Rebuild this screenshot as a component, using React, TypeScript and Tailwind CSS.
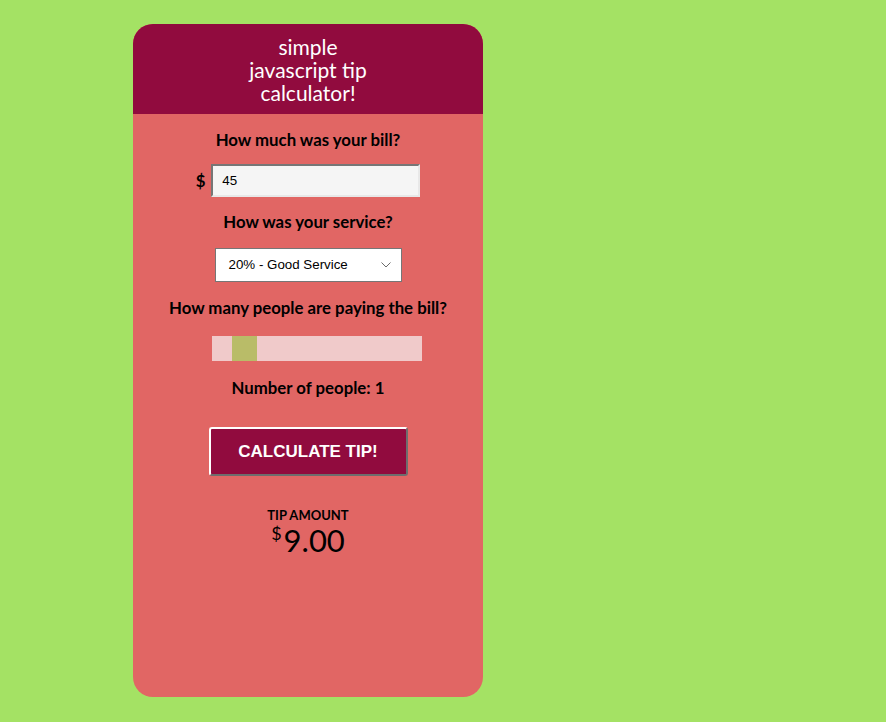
import React from "react";

export default function App() {
  const font = { fontFamily: "Lato, 'Noto Sans', sans-serif" };
  return (
    <div className="min-h-[722px] w-full bg-[#A4E264] pt-[24px] pl-[133px]" style={font}>
      <div className="w-[350px] h-[673px] rounded-[20px] overflow-hidden bg-[#E16664] flex flex-col">
        <div className="h-[90px] bg-[#910B3E] flex flex-col items-center justify-center text-white text-[21px] leading-[23px]">
          <span>simple</span>
          <span>javascript tip</span>
          <span>calculator!</span>
        </div>
        <div className="flex flex-col items-center pt-[16px] text-black">
          <div className="font-bold text-[16.8px] leading-[19px]">How much was your bill?</div>
          <div className="mt-[15px] flex items-center gap-[6px]">
            <span className="font-bold text-[16.8px]">$</span>
            <input
              readOnly
              value="45"
              className="w-[209px] h-[33px] bg-[#F5F5F5] border-2 border-t-[#767676] border-l-[#767676] border-b-[#E8E8E8] border-r-[#E8E8E8] pl-[9px] text-[13.33px] text-black outline-none"
              style={{ fontFamily: "'Liberation Sans', Arial, sans-serif" }}
            />
          </div>
          <div className="mt-[15px] font-bold text-[16.8px] leading-[19px]">How was your service?</div>
          <div className="relative mt-[17px]">
            <div
              className="w-[187px] h-[34px] bg-white border border-[#767676] flex items-center pl-[13px] text-[13.33px] text-black"
              style={{ fontFamily: "'Liberation Sans', Arial, sans-serif" }}
            >
              20% - Good Service
            </div>
            <svg className="absolute right-[11px] top-[14px]" width="10" height="6" viewBox="0 0 10 6">
              <path d="M0.5 0.5 L5 5 L9.5 0.5" fill="none" stroke="#6b6b6b" strokeWidth="1" />
            </svg>
          </div>
          <div className="mt-[16px] font-bold text-[16.8px] leading-[19px]">How many people are paying the bill?</div>
          <div className="mt-[19px] ml-[18px] w-[210px] h-[25px] bg-[#F0CACA] flex">
            <div className="ml-[20px] w-[25px] h-[25px] bg-[#B9BC68]" />
          </div>
          <div className="mt-[17px] font-bold text-[16.8px] leading-[19px]">Number of people: 1</div>
          <button
            className="mt-[30px] w-[199px] h-[49px] bg-[#910B3E] text-white font-bold text-[17px] rounded-[3px] border-2 border-t-white border-l-white border-b-[#6D6D6D] border-r-[#6D6D6D]"
            style={{ fontFamily: "'Liberation Sans', Arial, sans-serif" }}
          >
            CALCULATE TIP!
          </button>
          <div className="mt-[31px] font-bold text-[13px] leading-[16px]">TIP AMOUNT</div>
          <div className="flex items-start mt-[1px]">
            <span className="text-[18px] leading-[18px]">$</span>
            <span className="text-[31px] leading-[32px] ml-[2px]">9.00</span>
          </div>
        </div>
      </div>
    </div>
  );
}
